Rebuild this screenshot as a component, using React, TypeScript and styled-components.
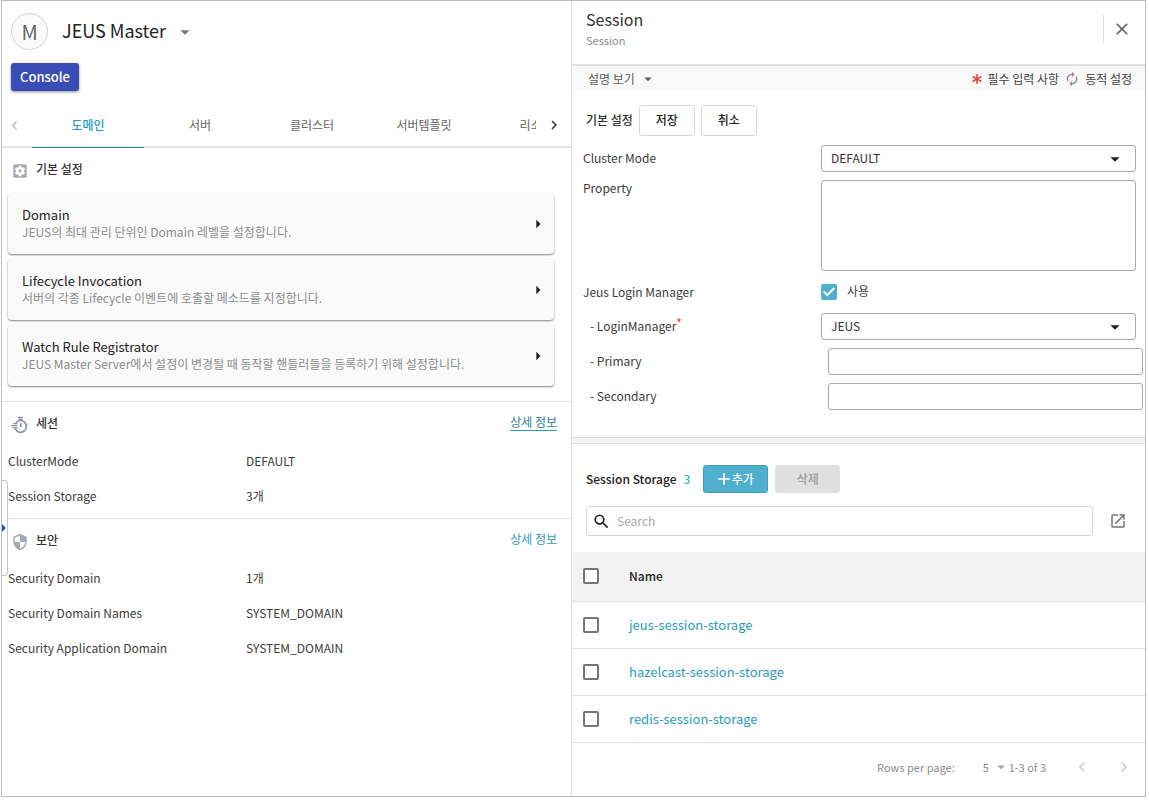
import React from "react";
import styled, { createGlobalStyle, css } from "styled-components";
import {
  MdSettingsApplications,
  MdSecurity,
  MdArrowDropDown,
  MdArrowRight,
  MdChevronLeft,
  MdChevronRight,
  MdClose,
  MdAutorenew,
  MdSearch,
  MdOpenInNew,
  MdAdd,
} from "react-icons/md";

const GlobalStyle = createGlobalStyle`
  *, *::before, *::after { box-sizing: border-box; }
  body {
    margin: 0;
    background: #fff;
    color: #3c3c3c;
    font-family: "Noto Sans CJK KR", "Noto Sans", sans-serif;
    font-size: 12px;
    line-height: 16px;
  }
  button, input, select, textarea { font: inherit; color: inherit; margin: 0; }
  h1, h2, h3, p, dl, dd, dt { margin: 0; }
`;

const teal = "#2a9cba";
const line = "#dfdfdf";

const Frame = styled.div`
  position: relative;
  display: grid;
  grid-template-columns: 570fr 573fr;
  min-height: calc(100vh - 6px);
  margin: 0 3px 6px 1px;
  border: 1px solid #bdbdbd;
`;

const LeftPane = styled.main`
  min-width: 0;
  border-right: 1px solid ${line};
`;

const RightPane = styled.aside`
  min-width: 0;
`;

const PlainButton = styled.button`
  display: inline-flex;
  align-items: center;
  justify-content: center;
  padding: 0;
  border: 0;
  background: none;
  cursor: pointer;
`;

/* Left pane: header */

const MasterHead = styled.header`
  display: flex;
  align-items: center;
  gap: 14px;
  padding: 12px 9px 0;
`;

const Avatar = styled.span`
  display: grid;
  place-items: center;
  width: 37px;
  height: 37px;
  border: 1px solid #d4d4d4;
  border-radius: 50%;
  background: #fafafa;
  color: #666;
  font-size: 20px;
  line-height: 28px;
`;

const MasterName = styled.h1`
  padding-bottom: 3px;
  color: #222;
  font-size: 18px;
  font-weight: 400;
  line-height: 28px;
`;

const MasterToggle = styled(PlainButton)`
  margin-left: -6px;
  color: #757575;
`;

const ConsoleButton = styled(PlainButton)`
  width: 68px;
  height: 28px;
  margin: 13px 9px 0;
  border-radius: 3px;
  background: #3a4db5;
  box-shadow: 0 1px 3px rgba(0, 0, 0, 0.45);
  color: #fff;
  font-size: 13px;
  font-weight: 500;
`;

const TabBar = styled.nav`
  display: grid;
  grid-template-columns: 30px 1fr 35px;
  height: 44px;
  margin-top: 13px;
  border-bottom: 2px solid #e4e4e4;
`;

const TabArrow = styled(PlainButton)<{ $dim?: boolean }>`
  padding-right: ${(p) => (p.$dim ? 5 : 0)}px;
  color: ${(p) => (p.$dim ? "#b5b5b5" : "#333")};
`;

const TabList = styled.div`
  display: flex;
  overflow: hidden;
  margin-bottom: -2px;
`;

const Tab = styled(PlainButton)<{ $active?: boolean }>`
  flex: 0 0 112px;
  padding-bottom: 2px;
  border-bottom: 1px solid ${(p) => (p.$active ? "#3a88a3" : "transparent")};
  color: ${(p) => (p.$active ? teal : "#666")};
  font-weight: ${(p) => (p.$active ? 500 : 400)};
`;

/* Left pane: sections */

const Section = styled.section<{ $first?: boolean }>`
  padding-bottom: ${(p) => (p.$first ? 15 : 5)}px;
  & + & { border-top: 1px solid ${line}; }
`;

const SectionHead = styled.div`
  display: flex;
  align-items: center;
  gap: 7px;
  height: 41px;
  padding: 0 14px 0 9px;
  color: #a6aab4;
  svg { margin-top: 5px; }
`;

const SectionTitle = styled.h2`
  flex: 1;
  color: #333;
  font-size: 12px;
  font-weight: 500;
  line-height: 16px;
`;

const DetailLink = styled.a<{ $underlined?: boolean }>`
  margin-bottom: 1px;
  border-bottom: 1px solid ${(p) => (p.$underlined ? teal : "transparent")};
  color: ${(p) => (p.$underlined ? "#2b7d95" : teal)};
  text-decoration: none;
`;

const CardList = styled.div`
  display: flex;
  flex-direction: column;
  gap: 5px;
  padding: 4px 17px 0 6px;
`;

const Card = styled.button`
  display: flex;
  align-items: center;
  justify-content: space-between;
  height: 61px;
  padding: 0 6px 0 14px;
  border: 0;
  border-radius: 4px;
  background: #fafafa;
  box-shadow: 0 1px 2px rgba(0, 0, 0, 0.5);
  color: #222;
  text-align: left;
  cursor: pointer;
`;

const CardText = styled.span`
  display: flex;
  flex-direction: column;
  padding-bottom: 2px;
`;

const CardTitle = styled.span`
  font-size: 13px;
  line-height: 18px;
`;

const CardNote = styled.span`
  color: #8c8c8c;
  line-height: 16px;
`;

const Facts = styled.dl`
  display: grid;
  grid-template-columns: 238px 1fr;
  grid-auto-rows: 35px;
  align-items: center;
  padding-left: 6px;
`;

const SideHandle = styled(PlainButton)`
  position: absolute;
  left: 0;
  top: 479px;
  width: 6px;
  height: 96px;
  border: 1px solid #c4c4c4;
  border-left: 0;
  border-radius: 0 4px 4px 0;
  background: #fff;
  justify-content: flex-start;
`;

/* Right pane: header */

const PaneHead = styled.header`
  display: flex;
  align-items: center;
  justify-content: space-between;
  height: 65px;
  padding: 0 13px 0 14px;
  border-bottom: 2px solid #e0e0e0;
`;

const PaneTitle = styled.h2`
  color: #333;
  font-size: 16px;
  font-weight: 400;
  line-height: 24px;
`;

const PaneSub = styled.p`
  margin-bottom: 10px;
  color: #8c8c8c;
  font-size: 11px;
  line-height: 18px;
`;

const CloseBox = styled.div`
  display: flex;
  height: 28px;
  margin-bottom: 7px;
  padding-left: 8px;
  border-left: 1px solid ${line};
  color: #666;
`;

const LegendBar = styled.div`
  display: flex;
  align-items: center;
  height: 25px;
  padding: 0 13px 0 16px;
  background: #f9f9f9;
  color: #444;
`;

const DescToggle = styled(PlainButton)`
  gap: 4px;
  margin-right: auto;
  color: #5c5c5c;
`;

const Legend = styled.span`
  display: inline-flex;
  align-items: center;
  gap: 5px;
  margin-left: 5px;
  svg { color: #8f8f8f; }
`;

/* Right pane: form */

const Actions = styled.div`
  display: flex;
  align-items: center;
  gap: 6px;
  padding: 14px 14px 0;
`;

const GroupTitle = styled.h3`
  padding-bottom: 2px;
  color: #333;
  font-size: 12px;
  font-weight: 500;
`;

const OutlineButton = styled(PlainButton)`
  width: 56px;
  height: 31px;
  padding-bottom: 1px;
  border: 1px solid #d9d9d9;
  border-radius: 3px;
  background: #fff;
  color: #222;
  font-weight: 500;
`;

const Form = styled.form`
  display: flex;
  flex-direction: column;
  gap: 8px;
  padding: 9px 9px 27px 11px;
`;

const indent = css`
  padding-left: 7px;
`;

const Field = styled.div<{ $indent?: boolean; $wide?: boolean }>`
  display: grid;
  grid-template-columns: ${(p) => (p.$indent && !p.$wide ? 231 : 238)}px 1fr;
  align-items: start;
  ${(p) => p.$indent && indent}
  margin-right: ${(p) => (p.$wide ? -7 : 0)}px;
`;

const Label = styled.label<{ $top?: boolean }>`
  padding: ${(p) => (p.$top ? 0 : 5)}px 0 5px;
`;

const Required = styled.sup`
  color: #e53935;
  font-size: 12px;
  line-height: 0;
  vertical-align: 3px;
`;

const boxed = css`
  width: 100%;
  border: 1px solid #a9a9a9;
  border-radius: 3px;
  background: #fff;
`;

const TextInput = styled.input`
  ${boxed}
  height: 27px;
  padding: 0 10px;
`;

const TextArea = styled.textarea`
  ${boxed}
  display: block;
  height: 91px;
  padding: 6px 10px;
  resize: none;
`;

const SelectWrap = styled.div`
  position: relative;
  color: #222;
  svg {
    position: absolute;
    right: 10px;
    top: 3px;
    pointer-events: none;
  }
`;

const Select = styled.select`
  ${boxed}
  display: block;
  height: 27px;
  padding: 0 9px 2px;
  appearance: none;
  color: #333;
`;

const Check = styled.input`
  position: relative;
  display: block;
  flex: none;
  width: 16px;
  height: 16px;
  border: 2px solid #757575;
  border-radius: 2px;
  background: #fff;
  appearance: none;
  &:checked {
    border-color: #4fb0ce;
    background: #4fb0ce;
  }
  &:checked::after {
    content: "";
    position: absolute;
    left: 3px;
    top: -1px;
    width: 6px;
    height: 11px;
    border: solid #fff;
    border-width: 0 2px 2px 0;
    transform: rotate(45deg);
  }
`;

const CheckLabel = styled.label`
  display: flex;
  align-items: center;
  gap: 10px;
  height: 26px;
`;

const CheckText = styled.span`
  padding-bottom: 2px;
`;

const Splitter = styled.div`
  height: 7px;
  border: solid #dde0e0;
  border-width: 1px 0;
  background: #f4f6f6;
`;

/* Right pane: storage list */

const StorageHead = styled.div`
  display: flex;
  align-items: center;
  gap: 7px;
  padding: 21px 14px 0;
`;

const StorageTitle = styled.h3`
  color: #222;
  font-size: 12px;
  font-weight: 500;
`;

const Count = styled.span`
  margin-right: 6px;
  color: #2bbfa4;
  font-size: 12px;
  font-weight: 500;
`;

const FillButton = styled(PlainButton)<{ $primary?: boolean }>`
  width: 65px;
  height: 28px;
  padding-bottom: 1px;
  border: 1px solid ${(p) => (p.$primary ? "#419fbb" : "#e0e0e0")};
  border-radius: 3px;
  background: ${(p) => (p.$primary ? "#4fb0ce" : "#e0e0e0")};
  color: ${(p) => (p.$primary ? "#fff" : "#9a9a9a")};
  font-weight: 500;
  svg { margin: 0 -2px 0 -4px; }
`;

const SearchRow = styled.div`
  display: flex;
  align-items: center;
  gap: 16px;
  padding: 13px 18px 16px 14px;
  color: #757575;
`;

const SearchBox = styled.label`
  display: flex;
  flex: 1;
  align-items: center;
  gap: 6px;
  height: 30px;
  padding: 0 5px;
  border: 1px solid #d9d9d9;
  border-radius: 3px;
  color: #222;
`;

const SearchInput = styled.input`
  flex: 1;
  min-width: 0;
  padding: 0 0 1px;
  border: 0;
  outline: 0;
  background: none;
  &::placeholder { color: #a8a8a8; opacity: 1; }
`;

const Table = styled.table`
  width: 100%;
  border-collapse: collapse;
  font-size: 13px;
`;

const Row = styled.tr<{ $head?: boolean }>`
  height: ${(p) => (p.$head ? 49 : 47)}px;
  border-bottom: 1px solid ${line};
  background: ${(p) => (p.$head ? "#f3f3f3" : "#fff")};
  color: #222;
`;

const cell = css`
  padding: 0;
  font-weight: 500;
  text-align: left;
`;

const HeadCell = styled.th`
  ${cell}
  font-size: 12px;
`;

const CheckCell = styled.td`
  ${cell}
  width: 57px;
  padding-left: 11px;
`;

const Cell = styled.td`
  ${cell}
  font-weight: 400;
`;

const StorageLink = styled.a`
  color: ${teal};
  text-decoration: none;
`;

const Pager = styled.footer`
  display: flex;
  align-items: center;
  justify-content: flex-end;
  height: 49px;
  padding-right: 11px;
  color: #8c8c8c;
  font-size: 11px;
`;

const PageSize = styled.span`
  position: relative;
  margin: 0 1px 0 28px;
  svg {
    position: absolute;
    right: -2px;
    top: -1px;
    color: #a5a5a5;
    pointer-events: none;
  }
`;

const PageSelect = styled.select`
  display: block;
  width: 25px;
  height: 16px;
  padding: 0;
  border: 0;
  background: none;
  appearance: none;
`;

const PageButtons = styled.span`
  display: flex;
  gap: 22px;
  margin-left: 26px;
  color: #cfcfcf;
`;

function StopwatchIcon() {
  return (
    <svg width="18" height="18" viewBox="0 0 18 18" fill="none" stroke="#8f949e" strokeWidth="1.7" aria-hidden="true">
      <path d="M7 1.5h5M7.5 3.4h4" strokeWidth="1.4" />
      <path d="M5 6.6A5.9 5.9 0 1 1 5 14.2" />
      <path d="M2 7.6h4.5M0 9.6h6.5M1.5 11.6h5M3 13.4h3" strokeWidth="1.2" />
      <path d="M9.8 7v4.2" />
    </svg>
  );
}

const tabs = ["도메인", "서버", "클러스터", "서버템플릿", "리소스"];

const cards = [
  { title: "Domain", note: "JEUS의 최대 관리 단위인 Domain 레벨을 설정합니다." },
  { title: "Lifecycle Invocation", note: "서버의 각종 Lifecycle 이벤트에 호출할 메소드를 지정합니다." },
  {
    title: "Watch Rule Registrator",
    note: "JEUS Master Server에서 설정이 변경될 때 동작할 핸들러들을 등록하기 위해 설정합니다.",
  },
];

const sessionFacts = [
  ["ClusterMode", "DEFAULT"],
  ["Session Storage", "3개"],
];

const securityFacts = [
  ["Security Domain", "1개"],
  ["Security Domain Names", "SYSTEM_DOMAIN"],
  ["Security Application Domain", "SYSTEM_DOMAIN"],
];

const storages = ["jeus-session-storage", "hazelcast-session-storage", "redis-session-storage"];

function FactList({ items }: { items: string[][] }) {
  return (
    <Facts>
      {items.map(([name, value]) => (
        <React.Fragment key={name}>
          <dt>{name}</dt>
          <dd>{value}</dd>
        </React.Fragment>
      ))}
    </Facts>
  );
}

function Dropdown({ id, options }: { id: string; options: string[] }) {
  return (
    <SelectWrap>
      <Select id={id}>
        {options.map((o) => (
          <option key={o}>{o}</option>
        ))}
      </Select>
      <MdArrowDropDown size={22} />
    </SelectWrap>
  );
}

function MasterPane() {
  return (
    <LeftPane>
      <MasterHead>
        <Avatar>M</Avatar>
        <MasterName>JEUS Master</MasterName>
        <MasterToggle aria-label="Select server">
          <MdArrowDropDown size={22} />
        </MasterToggle>
      </MasterHead>
      <ConsoleButton>Console</ConsoleButton>
      <TabBar>
        <TabArrow $dim aria-label="Previous tabs">
          <MdChevronLeft size={17} />
        </TabArrow>
        <TabList role="tablist">
          {tabs.map((t, i) => (
            <Tab key={t} role="tab" aria-selected={i === 0} $active={i === 0}>
              {t}
            </Tab>
          ))}
        </TabList>
        <TabArrow aria-label="Next tabs">
          <MdChevronRight size={18} />
        </TabArrow>
      </TabBar>
      <Section $first>
        <SectionHead>
          <MdSettingsApplications size={18} />
          <SectionTitle>기본 설정</SectionTitle>
        </SectionHead>
        <CardList>
          {cards.map((c) => (
            <Card key={c.title}>
              <CardText>
                <CardTitle>{c.title}</CardTitle>
                <CardNote>{c.note}</CardNote>
              </CardText>
              <MdArrowRight size={20} />
            </Card>
          ))}
        </CardList>
      </Section>
      <Section>
        <SectionHead>
          <StopwatchIcon />
          <SectionTitle>세션</SectionTitle>
          <DetailLink href="#session" $underlined>상세 정보</DetailLink>
        </SectionHead>
        <FactList items={sessionFacts} />
      </Section>
      <Section>
        <SectionHead>
          <MdSecurity size={18} />
          <SectionTitle>보안</SectionTitle>
          <DetailLink href="#security">상세 정보</DetailLink>
        </SectionHead>
        <FactList items={securityFacts} />
      </Section>
    </LeftPane>
  );
}

function SessionPane() {
  return (
    <RightPane>
      <PaneHead>
        <div>
          <PaneTitle>Session</PaneTitle>
          <PaneSub>Session</PaneSub>
        </div>
        <CloseBox>
          <PlainButton aria-label="Close">
            <MdClose size={20} />
          </PlainButton>
        </CloseBox>
      </PaneHead>
      <LegendBar>
        <DescToggle>
          설명 보기
          <MdArrowDropDown size={18} />
        </DescToggle>
        <Legend>
          <svg width="12" height="12" viewBox="0 0 12 12" aria-hidden="true">
            <path d="M6 1v10M1.5 3.5l9 5M1.5 8.5l9-5" stroke="#e0494d" strokeWidth="1.6" />
          </svg>
          필수 입력 사항
        </Legend>
        <Legend>
          <MdAutorenew size={16} />
          동적 설정
        </Legend>
      </LegendBar>
      <Actions>
        <GroupTitle>기본 설정</GroupTitle>
        <OutlineButton>저장</OutlineButton>
        <OutlineButton>취소</OutlineButton>
      </Actions>
      <Form>
        <Field>
          <Label htmlFor="cluster-mode">Cluster Mode</Label>
          <Dropdown id="cluster-mode" options={["DEFAULT"]} />
        </Field>
        <Field>
          <Label htmlFor="property" $top>Property</Label>
          <TextArea id="property" />
        </Field>
        <Field>
          <Label htmlFor="login-manager-use">Jeus Login Manager</Label>
          <CheckLabel>
            <Check id="login-manager-use" type="checkbox" defaultChecked />
            <CheckText>사용</CheckText>
          </CheckLabel>
        </Field>
        <Field $indent>
          <Label htmlFor="login-manager">
            - LoginManager<Required>*</Required>
          </Label>
          <Dropdown id="login-manager" options={["JEUS"]} />
        </Field>
        <Field $indent $wide>
          <Label htmlFor="primary">- Primary</Label>
          <TextInput id="primary" />
        </Field>
        <Field $indent $wide>
          <Label htmlFor="secondary">- Secondary</Label>
          <TextInput id="secondary" />
        </Field>
      </Form>
      <Splitter />
      <StorageHead>
        <StorageTitle>Session Storage</StorageTitle>
        <Count>3</Count>
        <FillButton $primary>
          <MdAdd size={20} />
          추가
        </FillButton>
        <FillButton disabled>삭제</FillButton>
      </StorageHead>
      <SearchRow>
        <SearchBox>
          <MdSearch size={19} />
          <SearchInput placeholder="Search" aria-label="Search" />
        </SearchBox>
        <PlainButton aria-label="Open in new window">
          <MdOpenInNew size={18} color="#757575" />
        </PlainButton>
      </SearchRow>
      <Table>
        <thead>
          <Row $head>
            <CheckCell>
              <Check type="checkbox" aria-label="Select all" />
            </CheckCell>
            <HeadCell>Name</HeadCell>
          </Row>
        </thead>
        <tbody>
          {storages.map((s) => (
            <Row key={s}>
              <CheckCell>
                <Check type="checkbox" aria-label={s} />
              </CheckCell>
              <Cell>
                <StorageLink href={`#${s}`}>{s}</StorageLink>
              </Cell>
            </Row>
          ))}
        </tbody>
      </Table>
      <Pager>
        <label htmlFor="page-size">Rows per page:</label>
        <PageSize>
          <PageSelect id="page-size">
            <option>5</option>
          </PageSelect>
          <MdArrowDropDown size={18} />
        </PageSize>
        <span>1-3 of 3</span>
        <PageButtons>
          <PlainButton aria-label="Previous page">
            <MdChevronLeft size={20} color="#cfcfcf" />
          </PlainButton>
          <PlainButton aria-label="Next page">
            <MdChevronRight size={20} color="#cfcfcf" />
          </PlainButton>
        </PageButtons>
      </Pager>
    </RightPane>
  );
}

export default function App() {
  return (
    <>
      <GlobalStyle />
      <Frame>
        <MasterPane />
        <SessionPane />
        <SideHandle aria-label="Open side menu">
          <svg width="4" height="8" viewBox="0 0 4 8" aria-hidden="true">
            <path d="M0 0l4 4-4 4z" fill="#3a4db5" />
          </svg>
        </SideHandle>
      </Frame>
    </>
  );
}
